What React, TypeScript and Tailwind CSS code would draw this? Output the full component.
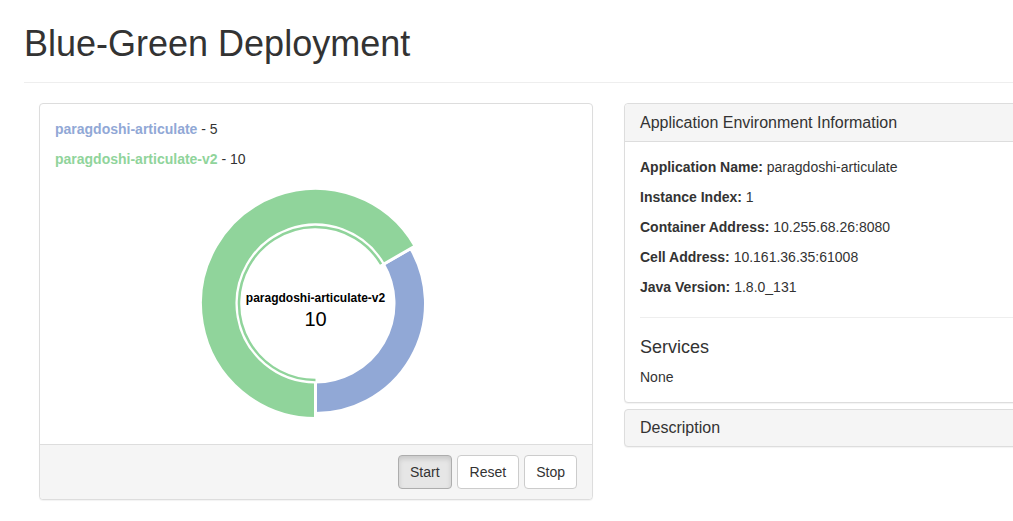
import React from 'react'

const BLUE = '#91a8d6'
const GREEN = '#90d49b'

const CX = 260.5
const CY = 124.5

function pt(r: number, deg: number) {
  const a = (deg * Math.PI) / 180
  return `${(CX + r * Math.sin(a)).toFixed(2)} ${(CY - r * Math.cos(a)).toFixed(2)}`
}

function slice(R: number, r: number, a0: number, a1: number) {
  const large = a1 - a0 > 180 ? 1 : 0
  return `M ${pt(R, a0)} A ${R} ${R} 0 ${large} 1 ${pt(R, a1)} L ${pt(r, a1)} A ${r} ${r} 0 ${large} 0 ${pt(r, a0)} Z`
}

function Donut() {
  return (
    <svg width="521" height="250" viewBox="0 0 521 250" className="block">
      <path d={slice(110, 78.5, 60, 180)} fill={BLUE} stroke="#fff" strokeWidth="3" />
      <path d={slice(115, 78.5, 180, 420)} fill={GREEN} stroke="#fff" strokeWidth="3" />
      <path
        d={`M ${pt(76.5, 180)} A 76.5 76.5 0 1 1 ${pt(76.5, 419)}`}
        fill="none"
        stroke={GREEN}
        strokeWidth="2.5"
      />
      <text
        x={CX}
        y="123"
        textAnchor="middle"
        fontFamily="'Liberation Sans', Arial, sans-serif"
        fontSize="12"
        fontWeight="bold"
        fill="#000"
      >
        paragdoshi-articulate-v2
      </text>
      <text
        x={CX}
        y="147"
        textAnchor="middle"
        fontFamily="'Liberation Sans', Arial, sans-serif"
        fontSize="20"
        fill="#000"
      >
        10
      </text>
    </svg>
  )
}

export default function App() {
  const info = [
    ['Application Name:', 'paragdoshi-articulate'],
    ['Instance Index:', '1'],
    ['Container Address:', '10.255.68.26:8080'],
    ['Cell Address:', '10.161.36.35:61008'],
    ['Java Version:', '1.8.0_131'],
  ]

  return (
    <div className="w-full min-h-[521px] overflow-hidden bg-white text-[#333] text-[14px] leading-5 font-['Liberation_Sans',Arial,sans-serif]">
      <div className="w-[1200px] pl-6">
        {/* Page header */}
        <div className="border-b border-[#eee] pb-[18px]">
          <h1 className="mt-6 text-[36px] leading-[40px] font-normal">Blue-Green Deployment</h1>
        </div>

        <div className="flex gap-[31px] pl-[15px] mt-5 items-start">
          {/* Chart panel */}
          <div className="w-[554px] shrink-0 border border-[#ddd] rounded bg-white shadow-[0_1px_1px_rgba(0,0,0,0.05)]">
            <div className="p-[15px]">
              <p className="mb-[10px]">
                <span className="font-bold" style={{ color: BLUE }}>paragdoshi-articulate</span> - 5
              </p>
              <p className="mb-[10px]">
                <span className="font-bold" style={{ color: GREEN }}>paragdoshi-articulate-v2</span> - 10
              </p>
              <Donut />
            </div>
            <div className="flex justify-end gap-[5px] bg-[#f5f5f5] border-t border-[#ddd] px-[15px] py-[10px] rounded-b">
              <button className="px-[11px] py-[6px] border border-[#adadad] rounded bg-[#e6e6e6] shadow-[inset_0_3px_5px_rgba(0,0,0,0.125)]">
                Start
              </button>
              <button className="px-3 py-[6px] border border-[#ccc] rounded bg-white">Reset</button>
              <button className="px-[11px] py-[6px] border border-[#ccc] rounded bg-white">Stop</button>
            </div>
          </div>

          {/* Info panels */}
          <div className="w-[554px] shrink-0 flex flex-col gap-[6px]">
            <div className="border border-[#ddd] rounded bg-white shadow-[0_1px_1px_rgba(0,0,0,0.05)]">
              <div className="bg-[#f5f5f5] border-b border-[#ddd] px-[15px] py-[10px] rounded-t">
                <h3 className="text-[16px] leading-[17px]">Application Environment Information</h3>
              </div>
              <div className="p-[15px]">
                {info.map(([k, v]) => (
                  <p key={k} className="mb-[10px] last-of-type:mb-0">
                    <span className="font-bold">{k}</span> {v}
                  </p>
                ))}
                <hr className="mt-5 mb-[19px] border-t border-[#eee]" />
                <h4 className="text-[18px] leading-5 mb-[10px]">Services</h4>
                <div>None</div>
              </div>
            </div>
            <div className="border border-[#ddd] rounded bg-[#f5f5f5] shadow-[0_1px_1px_rgba(0,0,0,0.05)] px-[15px] py-[10px]">
              <h3 className="text-[16px] leading-[16px]">Description</h3>
            </div>
          </div>
        </div>
      </div>
    </div>
  )
}
